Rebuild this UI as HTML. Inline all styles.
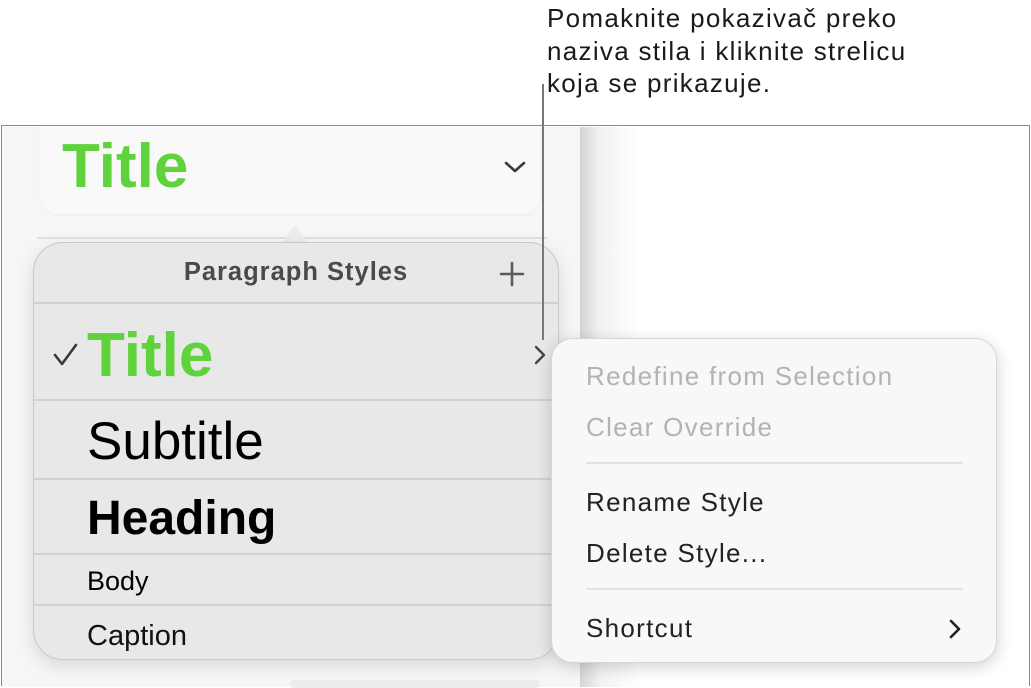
<!DOCTYPE html>
<html><head><meta charset="utf-8"><style>
*{margin:0;padding:0;box-sizing:border-box}
body{width:1031px;height:686px;background:#fff;position:relative;overflow:hidden;font-family:"Liberation Sans",sans-serif}
.abs{position:absolute}
.callout{left:547px;top:2px;font-size:26px;line-height:32.5px;color:#1a1a1a;letter-spacing:1.3px}
.win{left:1px;top:125px;width:1029px;height:561px;border:1.5px solid #8a8a8a;border-bottom:none;background:#fff}
.side{left:2px;top:126.5px;width:578px;height:560px;background:#f6f6f6}
.main{left:580px;top:126.5px;width:448px;height:560px;background:linear-gradient(90deg,#d4d4d4 0,#f2f2f2 20px,#fff 60px)}
.card{left:40px;top:127px;width:500px;height:87px;background:#f9f9f9;border-radius:0 0 18px 18px;box-shadow:0 1px 2px rgba(0,0,0,.04)}
.green{color:#5fd23c;font-weight:bold}
.pop{left:33px;top:242px;width:526px;height:418px;background:#e8e8e8;border:1px solid #c9c9c9;border-radius:30px;box-shadow:0 6px 18px rgba(0,0,0,.12);overflow:hidden}
.row{position:absolute;left:0;width:100%;border-top:2px solid #d2d2d2}
.menu{left:551px;top:338px;width:446px;height:325px;background:#f8f8f8;border-radius:22px;box-shadow:0 4px 16px rgba(0,0,0,.18);border:1px solid #d6d6d6}
.mi{position:absolute;left:34px;font-size:26px;color:#222;letter-spacing:1.3px}
.sep{position:absolute;left:34px;width:377px;height:2px;background:#e2e2e2}
</style></head><body>
<div class="abs callout">Pomaknite pokazivač preko<br>naziva stila i kliknite strelicu<br>koja se prikazuje.</div>
<div class="abs win"></div>
<div class="abs side"></div>
<div class="abs main"></div>
<div class="abs card"></div>
<div class="abs green" style="left:62px;top:129px;font-size:62px;line-height:76px">Title</div>
<svg class="abs" style="left:503px;top:159px" width="24" height="16"><path d="M3 4 L12 12 L21 4" fill="none" stroke="#3a3a3a" stroke-width="2.6" stroke-linecap="round" stroke-linejoin="round"/></svg>
<div class="abs" style="left:37px;top:237px;width:510px;height:2px;background:#e0e0e0"></div>
<div class="abs" style="left:290px;top:680px;width:250px;height:8px;background:#ececec;border-radius:6px"></div>
<svg class="abs" style="left:262px;top:214px" width="66" height="32"><path d="M0 31 C20 31 22 28 28 18 L31 13 Q33 10 35 13 L38 18 C44 28 46 31 66 31 Z" fill="#ececec"/></svg>
<div class="abs pop">
 <div class="abs" style="left:0;top:15px;width:100%;text-align:center;font-size:25.5px;font-weight:bold;color:#4a4a4a;letter-spacing:1px">Paragraph Styles</div>
 <svg class="abs" style="left:464px;top:17px" width="28" height="28"><path d="M14 3V25M3 14H25" stroke="#5a5a5a" stroke-width="2.6" stroke-linecap="round"/></svg>
 <div class="row" style="top:59px;height:98px">
  <svg class="abs" style="left:18px;top:38px" width="28" height="26"><path d="M3 13 L10 22 L24 3" fill="none" stroke="#3a3a3a" stroke-width="2.6" stroke-linecap="round" stroke-linejoin="round"/></svg>
  <div class="abs green" style="left:53px;top:14px;font-size:62px;line-height:76px">Title</div>
  <svg class="abs" style="left:498px;top:40px" width="16" height="22"><path d="M4 3 L12 11 L4 19" fill="none" stroke="#444" stroke-width="2.4" stroke-linecap="round" stroke-linejoin="round"/></svg>
 </div>
 <div class="row" style="top:156px;height:80px"><div class="abs" style="left:53px;top:10px;font-size:53px;line-height:62px;color:#000">Subtitle</div></div>
 <div class="row" style="top:235px;height:76px"><div class="abs" style="left:53px;top:11px;font-size:48px;line-height:56px;font-weight:bold;color:#000">Heading</div></div>
 <div class="row" style="top:310px;height:52px"><div class="abs" style="left:53px;top:9px;font-size:27px;line-height:34px;color:#000">Body</div></div>
 <div class="row" style="top:361px;height:60px"><div class="abs" style="left:53px;top:12px;font-size:29px;line-height:36px;color:#111">Caption</div></div>
</div>
<div class="abs" style="left:542px;top:84px;width:2px;height:256px;background:#777"></div>
<div class="abs menu">
 <div class="mi" style="top:22px;color:#b3b3b3">Redefine from Selection</div>
 <div class="mi" style="top:73px;color:#b3b3b3">Clear Override</div>
 <div class="sep" style="top:123px"></div>
 <div class="mi" style="top:148px">Rename Style</div>
 <div class="mi" style="top:199px">Delete Style...</div>
 <div class="sep" style="top:249px"></div>
 <div class="mi" style="top:274px">Shortcut</div>
 <svg class="abs" style="left:395px;top:279px" width="16" height="22"><path d="M4 3 L12 11 L4 19" fill="none" stroke="#222" stroke-width="2.6" stroke-linecap="round" stroke-linejoin="round"/></svg>
</div>
</body></html>
